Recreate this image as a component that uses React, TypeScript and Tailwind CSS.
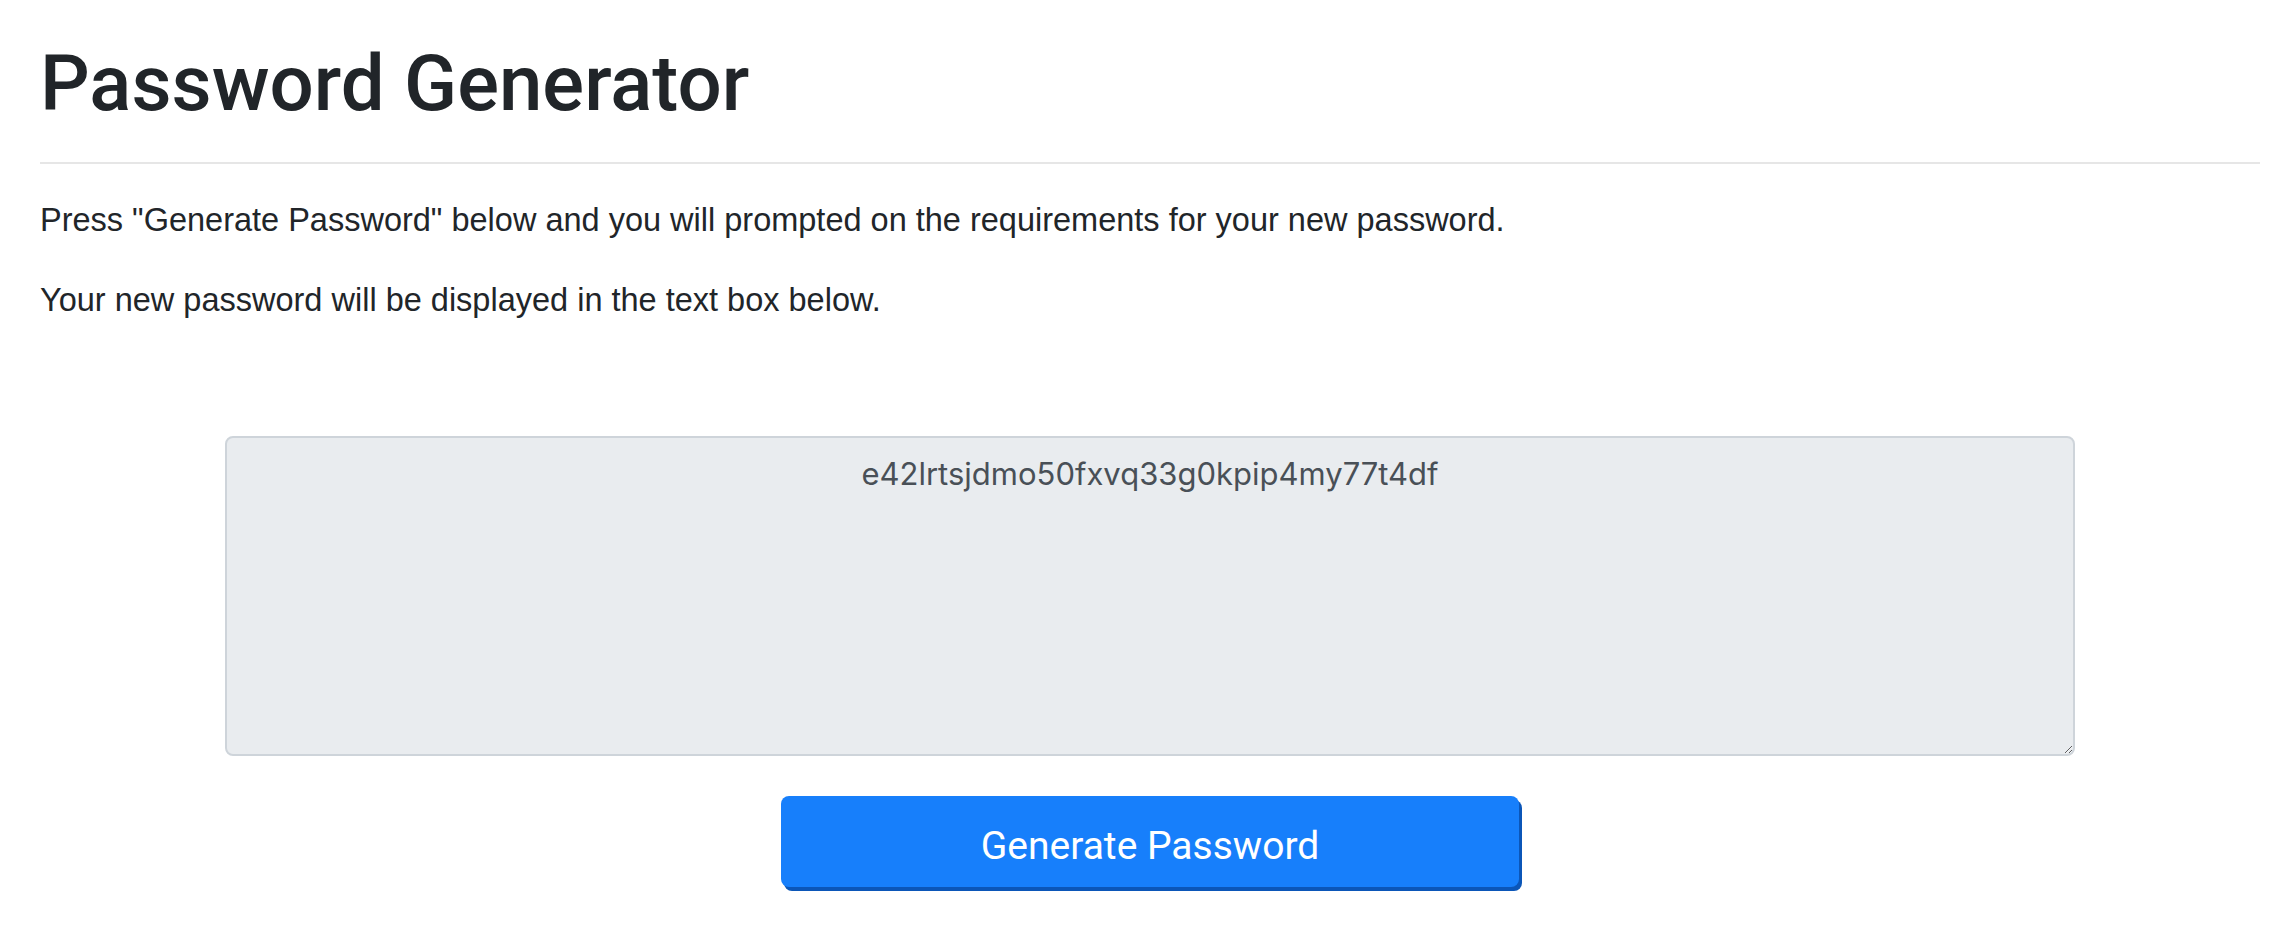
export default function App() {
  const password = "e42lrtsjdmo50fxvq33g0kpip4my77t4df";

  return (
    <div className="min-h-screen bg-white pl-[40px] pr-[20px] pt-[36px] text-[#212529] font-['Liberation_Sans',Arial,sans-serif]">
      {/* Header */}
      <h1 className="text-[78px] leading-[96px] font-medium font-['Roboto',Arial,sans-serif]">Password Generator</h1>
      <hr className="mt-[30px] border-0 border-t-2 border-[#e6e6e6]" />

      <p className="mt-[32px] text-[32.5px] leading-[48px]">
        Press "Generate Password" below and you will prompted on the requirements for your new password.
      </p>
      <p className="mt-[32px] text-[32.5px] leading-[48px]">Your new password will be displayed in the text box below.</p>

      {/* Password box */}
      <div className="mt-[112px] flex flex-col items-center">
        <textarea
          readOnly
          value={password}
          className="block w-[1850px] h-[320px] border-2 border-[#ced4da] rounded-[8px] bg-[#e9ecef] px-[24px] py-[12px] text-center text-[31px] leading-[48px] text-[#495057] font-['Inter',sans-serif] outline-none"
        />
        <button
          type="button"
          className="mt-[40px] w-[738px] h-[91px] pt-[8px] rounded-[8px] bg-[#177ffb] text-white text-[39px] leading-[60px] font-['Roboto',Arial,sans-serif] shadow-[3px_4px_0_#0b56b8]"
        >
          Generate Password
        </button>
      </div>
    </div>
  );
}
